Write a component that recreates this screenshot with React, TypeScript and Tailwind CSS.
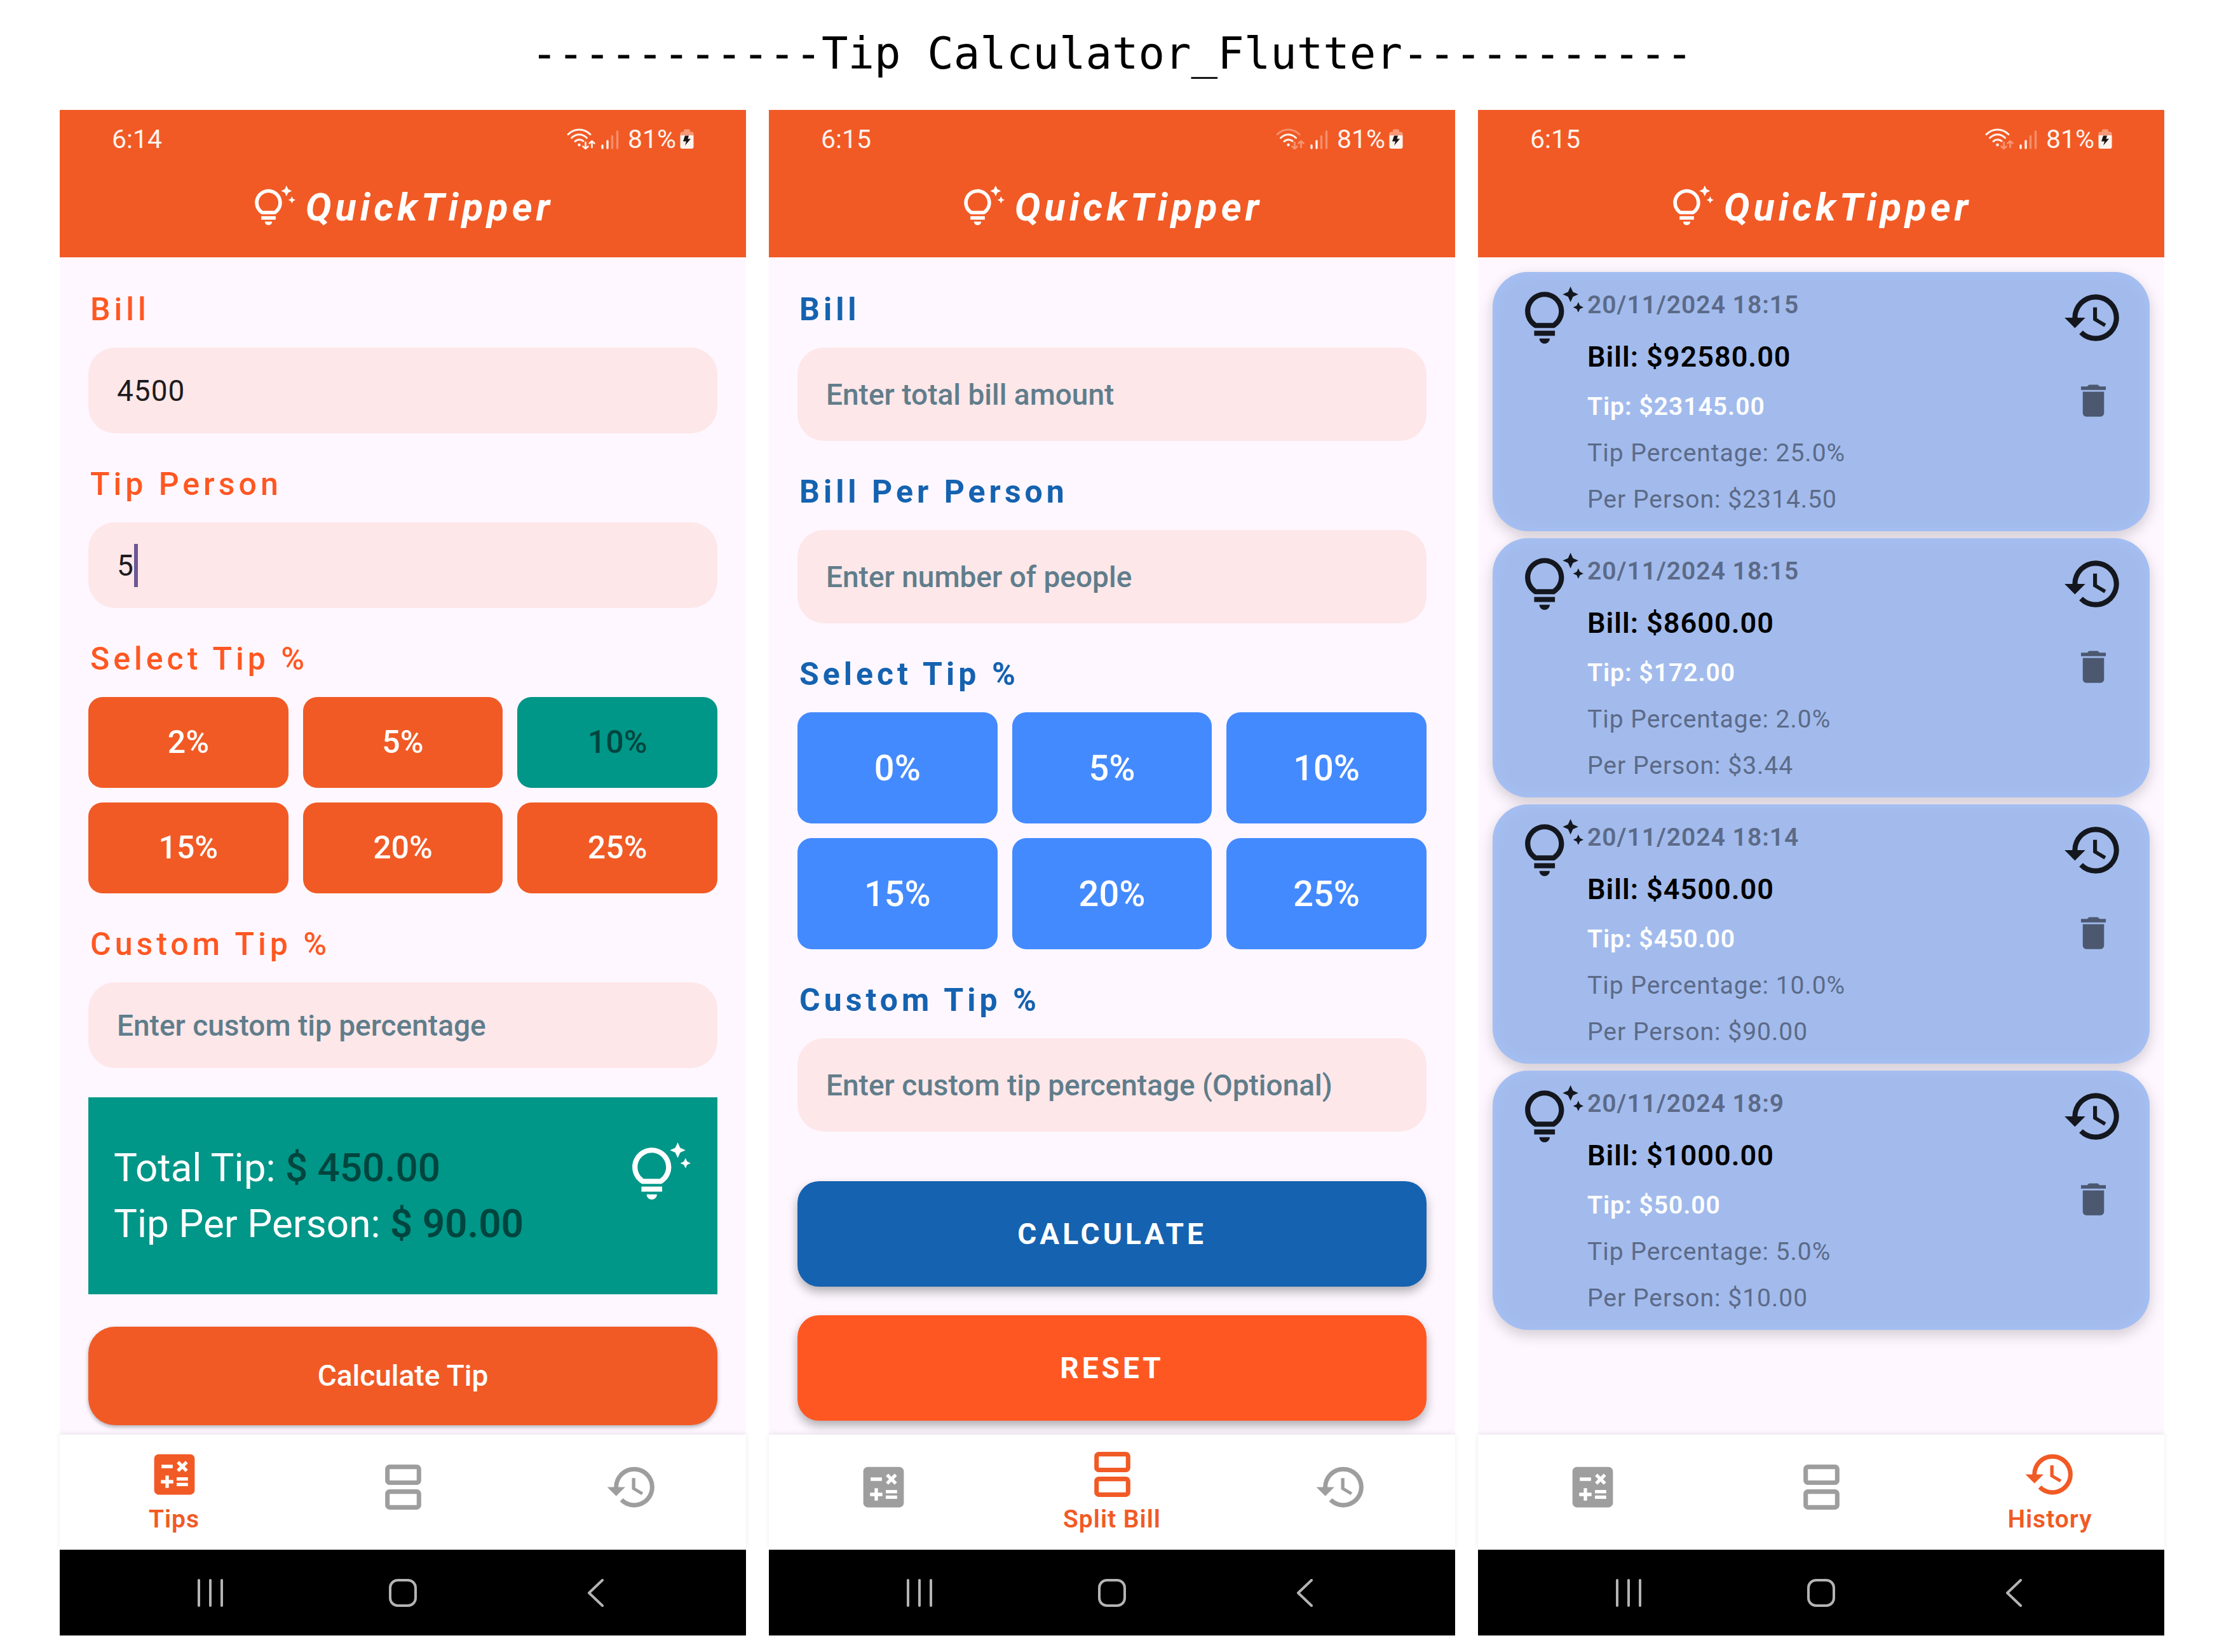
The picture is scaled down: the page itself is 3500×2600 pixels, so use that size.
import React from "react";
import {
  MdCalculate,
  MdDelete,
  MdHistory,
  MdOutlineSplitscreen,
  MdOutlineTipsAndUpdates,
} from "react-icons/md";

type Tab = "Tips" | "Split Bill" | "History";
type Tone = "orange" | "blue";
type Wifi = { strong: boolean; transfer: boolean };

function StatusIcons({ strong, transfer }: Wifi) {
  return (
    <svg viewBox="0 0 82 34" className="h-[34px] w-[82px]" fill="none" strokeLinecap="round" stroke="#FFF3EE" aria-hidden="true">
      <g strokeWidth="3">
        <path d="M2 9.500C12 -0.500 27 -0.500 37 9.500" opacity={strong ? 1 : 0.35} />
        <path d="M7.500 15C14.500 8 24.500 8 31.500 15" />
        <path d="M13 20.500C17 17 22 17 26 20" />
      </g>
      <circle cx="19.500" cy="26" r="2.300" fill="#FFF3EE" stroke="none" />
      <g strokeWidth="2.600" strokeLinejoin="round" opacity={transfer ? 1 : 0.4}>
        <path d="M29.500 22V32M25.500 28.500L29.500 32L33.500 28.500" />
        <path d="M39.500 30V20M35.500 23.500L39.500 20L43.500 23.500" />
      </g>
      <g strokeWidth="3.400">
        <path d="M56 27V31" />
        <path d="M64 20V31" />
        <path d="M71.500 12.500V31" opacity=".35" />
        <path d="M79.500 5V31" opacity=".35" />
      </g>
    </svg>
  );
}

function Battery() {
  return (
    <svg viewBox="0 0 22 32" className="h-[32px] w-[22px]" aria-hidden="true">
      <path d="M0.500 10V7.500A3 3 0 0 1 3.500 4.500H6V2.500A2 2 0 0 1 8 0.500H14A2 2 0 0 1 16 2.500V4.500H18.500A3 3 0 0 1 21.500 7.500V10Z" fill="#F79A78" />
      <path d="M0.500 10H21.500V28A3 3 0 0 1 18.500 31H3.500A3 3 0 0 1 0.500 28Z" fill="#FFF3EE" />
      <path d="M8 10.500H14L12.500 15.500H17L8 26L10 19.500H5Z" fill="#1C1412" />
    </svg>
  );
}

function Header({ time, wifi }: { time: string; wifi: Wifi }) {
  return (
    <header className="bg-[#F15A25] text-white">
      <div className="flex h-[74px] items-center justify-between px-[82px] pt-[18px] text-[41px] leading-none text-[#FFF3EE]">
        <span>{time}</span>
        <div className="flex items-center">
          <StatusIcons {...wifi} />
          <span className="ml-3.5 mr-1.5">81%</span>
          <Battery />
        </div>
      </div>
      <div className="flex h-[158px] items-center justify-center gap-4">
        <MdOutlineTipsAndUpdates className="size-[68px]" />
        <h2 className="text-[61px] leading-none font-bold tracking-[6px] italic">QuickTipper</h2>
      </div>
    </header>
  );
}

const tabs: { name: Tab; Icon: React.ComponentType<{ className?: string }> }[] = [
  { name: "Tips", Icon: MdCalculate },
  { name: "Split Bill", Icon: MdOutlineSplitscreen },
  { name: "History", Icon: MdHistory },
];

function TabBar({ active }: { active: Tab }) {
  return (
    <nav className="grid h-[181px] grid-cols-3 bg-white shadow-[0_-2px_8px_rgba(0,0,0,0.08)]">
      {tabs.map(({ name, Icon }) =>
        name === active ? (
          <button key={name} type="button" aria-current="page" className="flex flex-col items-center pt-5 text-[#F15A25]">
            <Icon className="size-[85px]" />
            <span className="mt-1 text-[39px] leading-[48px] font-semibold tracking-[1px]">{name}</span>
          </button>
        ) : (
          <button key={name} type="button" aria-label={name} className="flex flex-col items-center pt-10 text-[#9E9E9E]">
            <Icon className="size-[85px]" />
          </button>
        ),
      )}
    </nav>
  );
}

function SystemBar() {
  return (
    <div className="grid h-[135px] grid-cols-3 bg-black px-[85px] text-[#B4B4B4]">
      <button type="button" aria-label="Recent apps" className="flex items-center justify-center">
        <svg viewBox="0 0 44 44" className="size-11" fill="none" stroke="currentColor" strokeWidth="4" strokeLinecap="round">
          <path d="M4 2V42M22 2V42M40 2V42" />
        </svg>
      </button>
      <button type="button" aria-label="Home" className="flex items-center justify-center">
        <svg viewBox="0 0 44 44" className="size-11" fill="none" stroke="currentColor" strokeWidth="4">
          <rect x="2" y="2" width="40" height="40" rx="12" />
        </svg>
      </button>
      <button type="button" aria-label="Back" className="flex items-center justify-center">
        <svg viewBox="0 0 44 44" className="size-11" fill="none" stroke="currentColor" strokeWidth="4" strokeLinecap="round" strokeLinejoin="round">
          <path d="M33 2L12 22L33 42" />
        </svg>
      </button>
    </div>
  );
}

type PhoneProps = { time: string; wifi: Wifi; tab: Tab; children: React.ReactNode };

function Phone({ time, wifi, tab, children }: PhoneProps) {
  return (
    <section className="flex flex-col">
      <Header time={time} wifi={wifi} />
      <main className="flex-1 bg-[#FEF7FF]">{children}</main>
      <TabBar active={tab} />
      <SystemBar />
    </section>
  );
}

function labelClass(tone: Tone) {
  return tone === "orange"
    ? "block px-[3px] pt-[50px] pb-[30px] text-[50px] leading-[60px] tracking-[6px] font-medium text-[#FF5722]"
    : "block px-[3px] pt-[50px] pb-[30px] text-[50px] leading-[60px] tracking-[6px] font-bold text-[#1562B0]";
}

type FieldProps = { id: string; label: string; tone: Tone; value?: string; placeholder?: string; caret?: boolean };

function Field({ id, label, tone, value, placeholder, caret }: FieldProps) {
  return (
    <div>
      <label htmlFor={id} className={labelClass(tone)}>
        {label}
      </label>
      <div className="relative">
        <input
          id={id}
          type="text"
          defaultValue={value}
          placeholder={placeholder}
          className={
            "block w-full rounded-[42px] bg-[#FDE7E9] px-[45px] text-[46px] text-[#1D1B20] outline-none placeholder:font-medium placeholder:text-[#607D8B] placeholder:opacity-100 " +
            (tone === "orange" ? "h-[135px] " : "h-[147px] ") +
            (value ? "tracking-[1px]" : "")
          }
        />
        {caret && <span className="absolute top-[34px] left-[72px] h-[68px] w-[6px] bg-[#6B5893]" />}
      </div>
    </div>
  );
}

function Choices({ tone, values, selected }: { tone: Tone; values: number[]; selected?: number }) {
  return (
    <fieldset>
      <legend className={labelClass(tone)}>Select Tip %</legend>
      <div className="grid grid-cols-3 gap-[23px]">
        {values.map((v) => (
          <button
            key={v}
            type="button"
            aria-pressed={v === selected}
            className={
              "rounded-[22px] font-medium " +
              (tone === "blue"
                ? "h-[175px] bg-[#448AFF] text-[56px] text-white"
                : v === selected
                  ? "h-[143px] bg-[#009688] text-[50px] text-[#00453E]"
                  : "h-[143px] bg-[#F15A25] text-[50px] text-white")
            }
          >
            {v}%
          </button>
        ))}
      </div>
    </fieldset>
  );
}

function TipsScreen() {
  return (
    <Phone time="6:14" tab="Tips" wifi={{ strong: true, transfer: true }}>
      <div className="px-[45px] pt-[2px] pb-[15px]">
        <Field id="tips-bill" label="Bill" tone="orange" value="4500" />
        <Field id="tips-person" label="Tip Person" tone="orange" value="5" caret />
        <Choices tone="orange" values={[2, 5, 10, 15, 20, 25]} selected={10} />
        <Field id="tips-custom" label="Custom Tip %" tone="orange" placeholder="Enter custom tip percentage" />
        <div className="mt-[46px] flex items-start justify-between bg-[#009688] py-[67px] pr-[42px] pl-[40px] text-[62px] leading-[88px] text-white">
          <div>
            <p>
              Total Tip: <span className="font-medium text-[#00453E]">$ 450.00</span>
            </p>
            <p>
              Tip Per Person: <span className="font-semibold text-[#00453E]">$ 90.00</span>
            </p>
          </div>
          <MdOutlineTipsAndUpdates className="mt-1 size-[98px]" />
        </div>
        <button type="button" className="mt-[51px] h-[155px] w-full rounded-[42px] bg-[#F15A25] text-[46px] font-medium text-white shadow-[0_3px_6px_rgba(0,0,0,0.3)]">
          Calculate Tip
        </button>
      </div>
    </Phone>
  );
}

function SplitScreen() {
  return (
    <Phone time="6:15" tab="Split Bill" wifi={{ strong: false, transfer: false }}>
      <div className="px-[45px] pt-[2px] pb-[21px]">
        <Field id="split-bill" label="Bill" tone="blue" placeholder="Enter total bill amount" />
        <Field id="split-person" label="Bill Per Person" tone="blue" placeholder="Enter number of people" />
        <Choices tone="blue" values={[0, 5, 10, 15, 20, 25]} />
        <Field id="split-custom" label="Custom Tip %" tone="blue" placeholder="Enter custom tip percentage (Optional)" />
        <div className="mt-[78px] grid gap-[45px] text-[46px] font-bold tracking-[5px] text-white">
          <button type="button" className="h-[166px] rounded-[34px] bg-[#1562B0] shadow-[0_8px_16px_rgba(0,0,0,0.3)]">
            CALCULATE
          </button>
          <button type="button" className="h-[166px] rounded-[34px] bg-[#FF5722] shadow-[0_8px_16px_rgba(0,0,0,0.3)]">
            RESET
          </button>
        </div>
      </div>
    </Phone>
  );
}

const records = [
  { date: "20/11/2024 18:15", bill: "92580.00", tip: "23145.00", percent: "25.0", person: "2314.50" },
  { date: "20/11/2024 18:15", bill: "8600.00", tip: "172.00", percent: "2.0", person: "3.44" },
  { date: "20/11/2024 18:14", bill: "4500.00", tip: "450.00", percent: "10.0", person: "90.00" },
  { date: "20/11/2024 18:9", bill: "1000.00", tip: "50.00", percent: "5.0", person: "10.00" },
];

function HistoryScreen() {
  return (
    <Phone time="6:15" tab="History" wifi={{ strong: true, transfer: false }}>
      <ul className="grid gap-[11px] px-[23px] pt-[23px]">
        {records.map((r) => (
          <li
            key={r.bill}
            className="flex h-[408px] items-start rounded-[56px] bg-[#A2BBEC] pt-[23px] pr-[40px] pl-[45px] shadow-[0_8px_22px_rgba(0,0,0,0.18),inset_0_0_24px_#A9C2F8]"
          >
            <MdOutlineTipsAndUpdates className="size-[98px] shrink-0 text-[#14171E]" />
            <div className="flex-1 pt-px pl-1.5 text-[39px] leading-[56px] tracking-[1px] text-[#5C6A88]">
              <p className="font-semibold">{r.date}</p>
              <p className="mt-[22px] text-[45px] leading-[64px] font-semibold text-black">Bill: ${r.bill}</p>
              <p className="mt-[18px] font-semibold text-white">Tip: ${r.tip}</p>
              <p className="mt-[17px]">Tip Percentage: {r.percent}%</p>
              <p className="mt-[17px]">Per Person: ${r.person}</p>
            </div>
            <div className="flex flex-col items-center">
              <MdHistory className="size-[98px] text-[#14171E]" />
              <button type="button" aria-label="Delete record" className="mt-12 text-[#4B5870]">
                <MdDelete className="size-[67px]" />
              </button>
            </div>
          </li>
        ))}
      </ul>
    </Phone>
  );
}

export default function App() {
  return (
    <div className="min-h-screen bg-white px-[94px] pb-[26px] font-['Roboto',sans-serif]">
      <h1 className="flex h-[173px] items-center justify-center pb-1 text-[69px] leading-none text-black font-['DejaVu_Sans_Mono',monospace] whitespace-pre">
        -----------Tip Calculator_Flutter-----------
      </h1>
      <div className="grid grid-cols-3 gap-9">
        <TipsScreen />
        <SplitScreen />
        <HistoryScreen />
      </div>
    </div>
  );
}
